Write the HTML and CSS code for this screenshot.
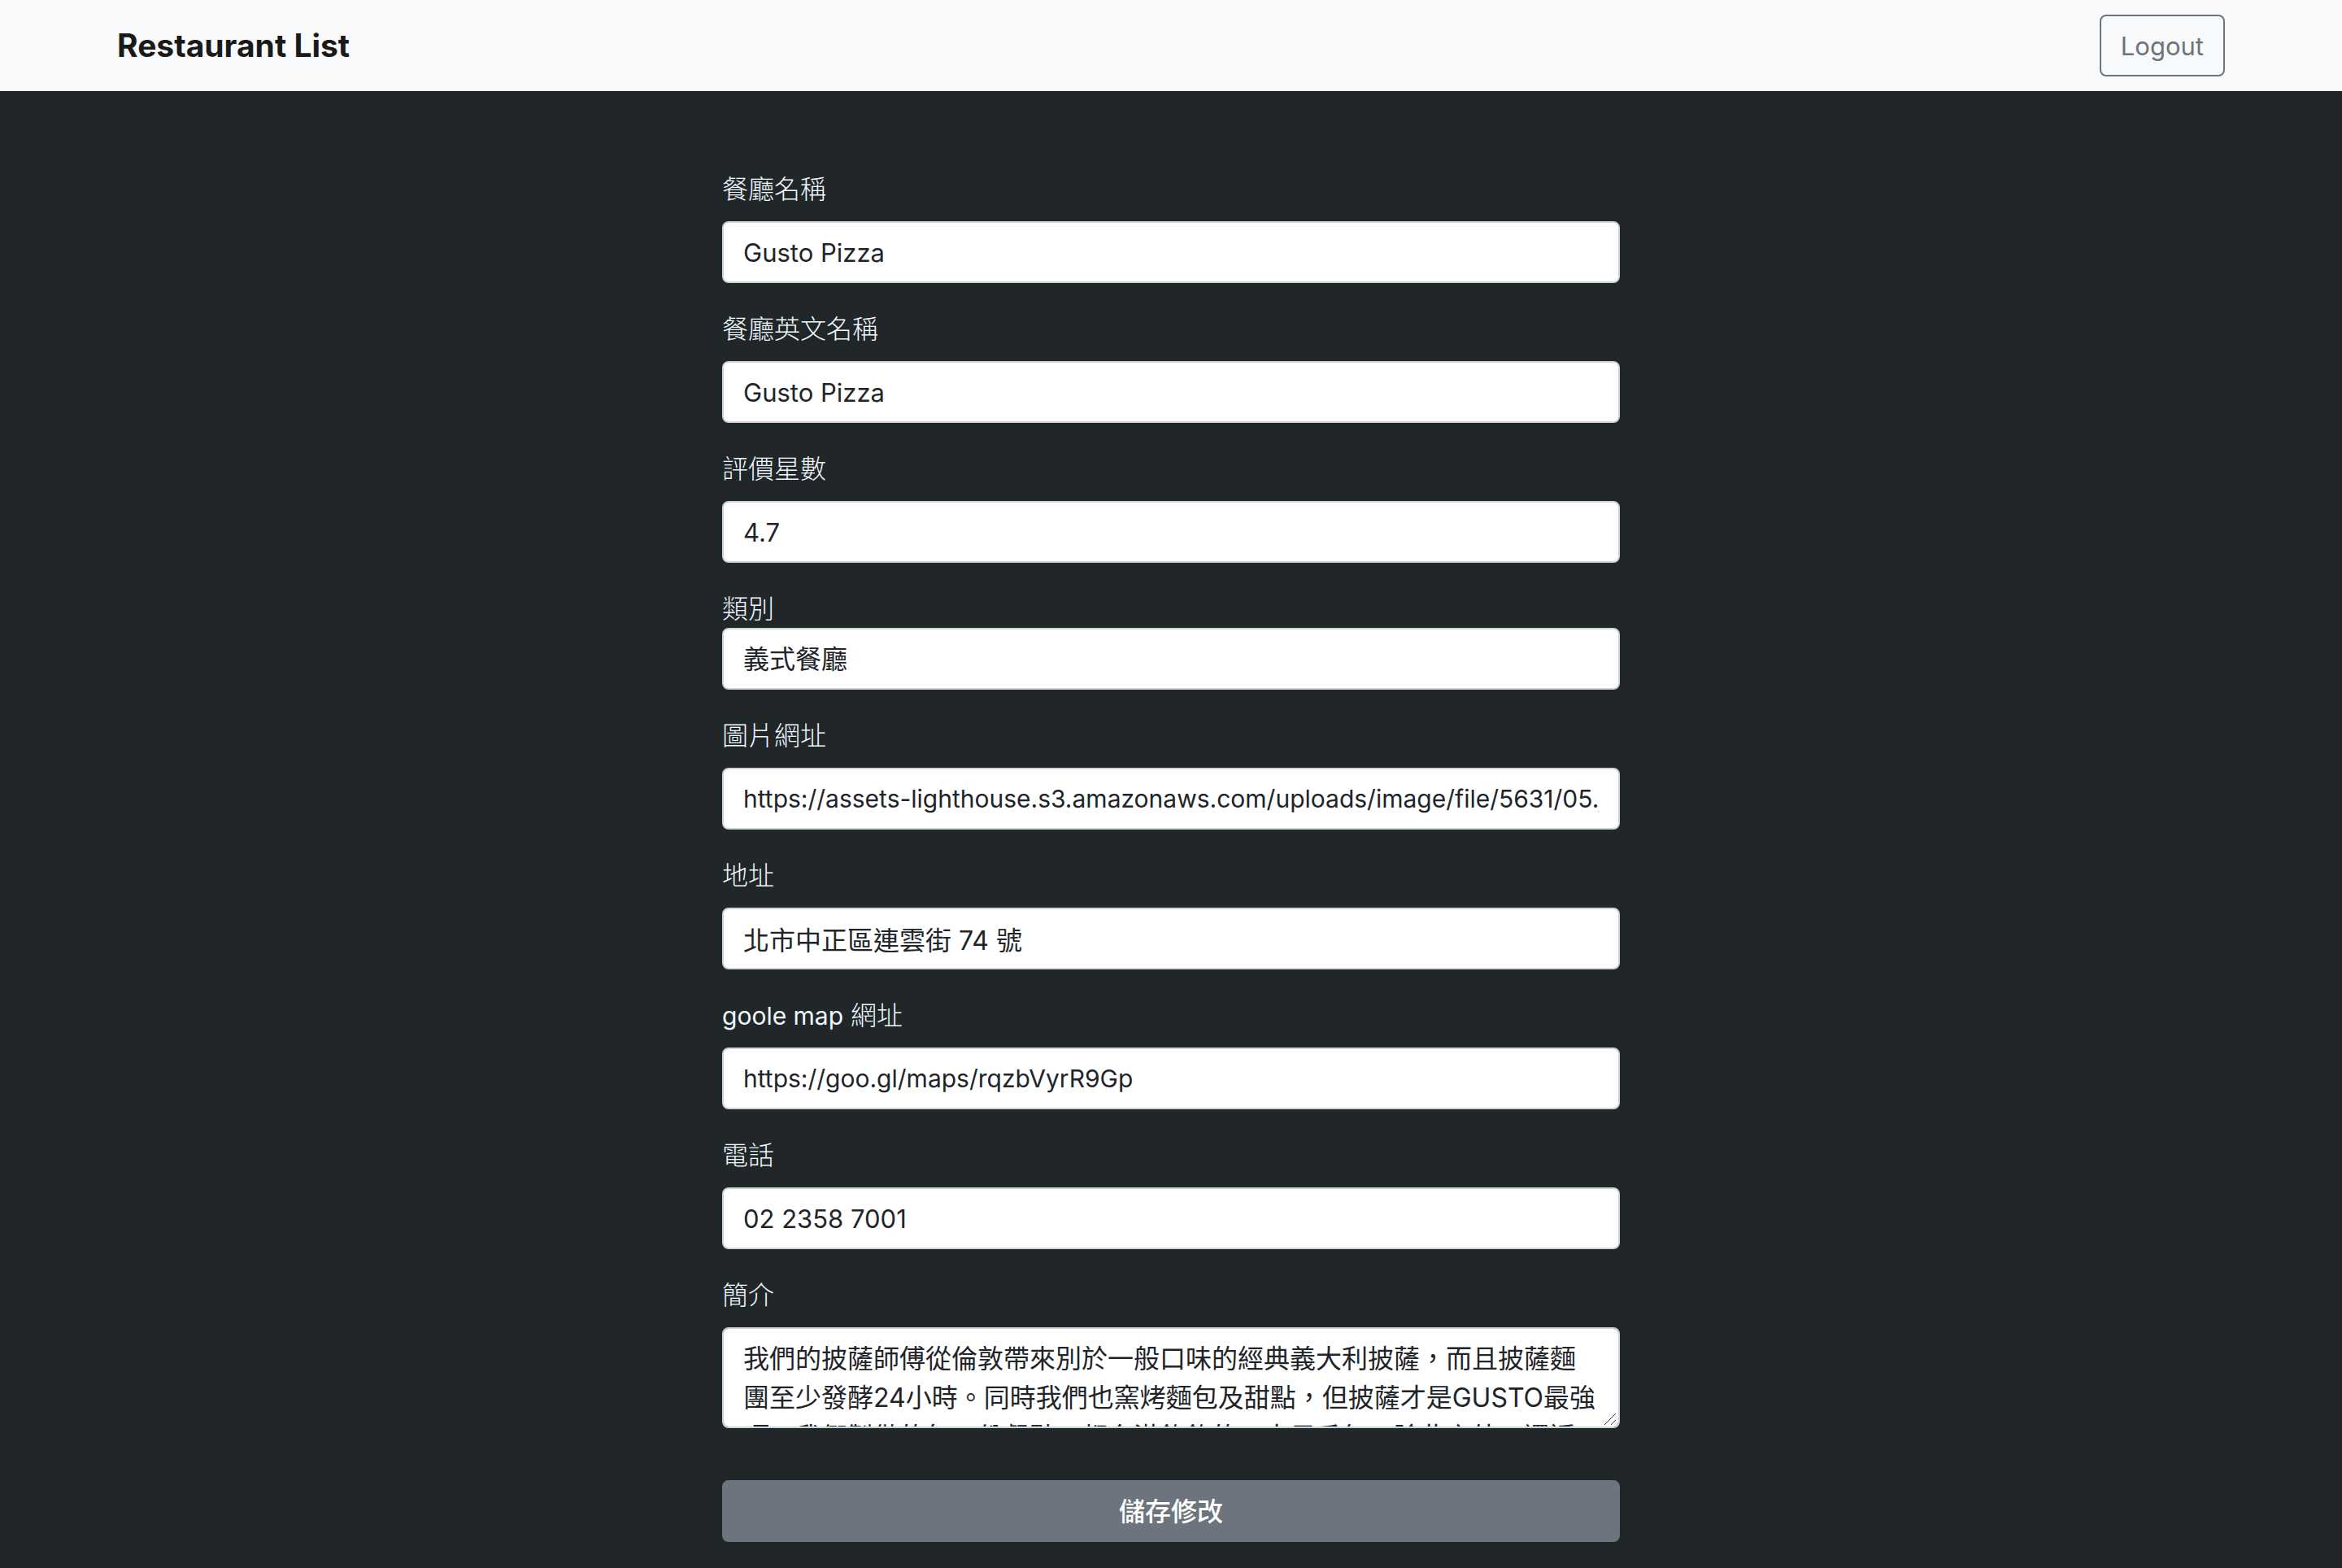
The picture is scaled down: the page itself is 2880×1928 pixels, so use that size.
FILE: index.html
```html
<!DOCTYPE html>
<html lang="zh-Hant">
<head>
  <meta charset="utf-8">
  <meta name="viewport" content="width=device-width, initial-scale=1">
  <title>Restaurant List</title>
  <link rel="stylesheet" href="styles.css">
</head>
<body>
  <header class="navbar">
    <div class="container">
      <a class="brand" href="#">Restaurant List</a>
      <button class="btn btn-outline latin" type="button">Logout</button>
    </div>
  </header>

  <main class="page">
    <form class="edit-form">
      <div class="field">
        <label for="name">餐廳名稱</label>
        <input class="control latin" id="name" type="text" value="Gusto Pizza">
      </div>
      <div class="field">
        <label for="name-en">餐廳英文名稱</label>
        <input class="control latin" id="name-en" type="text" value="Gusto Pizza">
      </div>
      <div class="field">
        <label for="rating">評價星數</label>
        <input class="control latin" id="rating" type="text" value="4.7">
      </div>
      <div class="field field-tight">
        <label for="category">類別</label>
        <select class="control" id="category">
          <option>義式餐廳</option>
        </select>
      </div>
      <div class="field">
        <label for="image">圖片網址</label>
        <input class="control latin-small" id="image" type="text" value="https://assets-lighthouse.s3.amazonaws.com/uploads/image/file/5631/05.jpg">
      </div>
      <div class="field">
        <label for="location">地址</label>
        <input class="control" id="location" type="text" value="北市中正區連雲街 74 號">
      </div>
      <div class="field">
        <label for="map"><span class="latin-small">goole map</span> 網址</label>
        <input class="control latin-small" id="map" type="text" value="https://goo.gl/maps/rqzbVyrR9Gp">
      </div>
      <div class="field">
        <label for="phone">電話</label>
        <input class="control latin" id="phone" type="text" value="02 2358 7001">
      </div>
      <div class="field">
        <label for="description">簡介</label>
        <div class="textarea-wrap">
          <textarea class="control" id="description" rows="2">我們的披薩師傅從倫敦帶來別於一般口味的經典義大利披薩，而且披薩麵團至少發酵24小時。同時我們也窯烤麵包及甜點，但披薩才是GUSTO最強項。我們製做的每一份餐點，都充滿飽飽的、十足香氣。除此之外，還透</textarea>
          <svg class="grip" viewBox="0 0 16 16" aria-hidden="true"><path d="M1 15 15 1M9 15l6-6"/></svg>
        </div>
      </div>
      <button class="btn btn-save" type="submit">儲存修改</button>
    </form>
  </main>
</body>
</html>
```

FILE: styles.css
```css
*,
*::before,
*::after {
  box-sizing: border-box;
}

body {
  margin: 0;
  min-height: 100vh;
  background: #212629;
  color: #212529;
  font: 400 32px/48px Inter, "Noto Sans CJK TC", sans-serif;
}

.navbar {
  padding: 16px 0;
  background: #f8f9fa;
}

.container {
  display: flex;
  align-items: center;
  justify-content: space-between;
  max-width: 2640px;
  margin: 0 auto;
  padding: 0 24px;
}

.brand {
  padding: 10px 0;
  color: #1a1a1a;
  font-size: 39px;
  font-weight: 700;
  line-height: 60px;
  text-decoration: none;
}

.btn {
  padding: 13px 24px 11px;
  border: 2px solid #6c757d;
  border-radius: 8px;
  font: inherit;
  cursor: pointer;
}

.btn-outline {
  background: transparent;
  color: #6c757d;
}

.btn-save {
  width: 100%;
  margin-top: 32px;
  background: #6c757d;
  color: #fff;
  font-weight: 500;
}

.page {
  padding: 96px 24px 32px;
}

.edit-form {
  max-width: 1104px;
  margin: 0 auto;
}

.field {
  display: flex;
  flex-direction: column;
  gap: 16px;
  margin-bottom: 32px;
}

.field-tight {
  gap: 0;
}

.field label {
  height: 48px;
  color: #f0f8ff;
  font-weight: 300;
  line-height: 50px;
}

.control {
  display: block;
  width: 100%;
  height: 76px;
  margin: 0;
  padding: 12px 24px;
  border: 2px solid #ced4da;
  border-radius: 8px;
  background: #fff;
  color: #212529;
  font: inherit;
  appearance: none;
}

select.control {
  padding: 13px 24px 11px;
}

textarea.control {
  height: 124px;
  padding: 13px 24px 11px;
  overflow-y: auto;
  resize: none;
  scrollbar-width: none;
}

/* Latin letters run larger than the Chinese ones at the same size */
.latin {
  font-size: 31px;
}

.latin-small {
  font-size: 30px;
  font-weight: 400;
}

.textarea-wrap {
  position: relative;
}

.grip {
  position: absolute;
  right: 4px;
  bottom: 3px;
  width: 16px;
  height: 16px;
  fill: none;
  stroke: #444;
  stroke-width: 1;
}
```
